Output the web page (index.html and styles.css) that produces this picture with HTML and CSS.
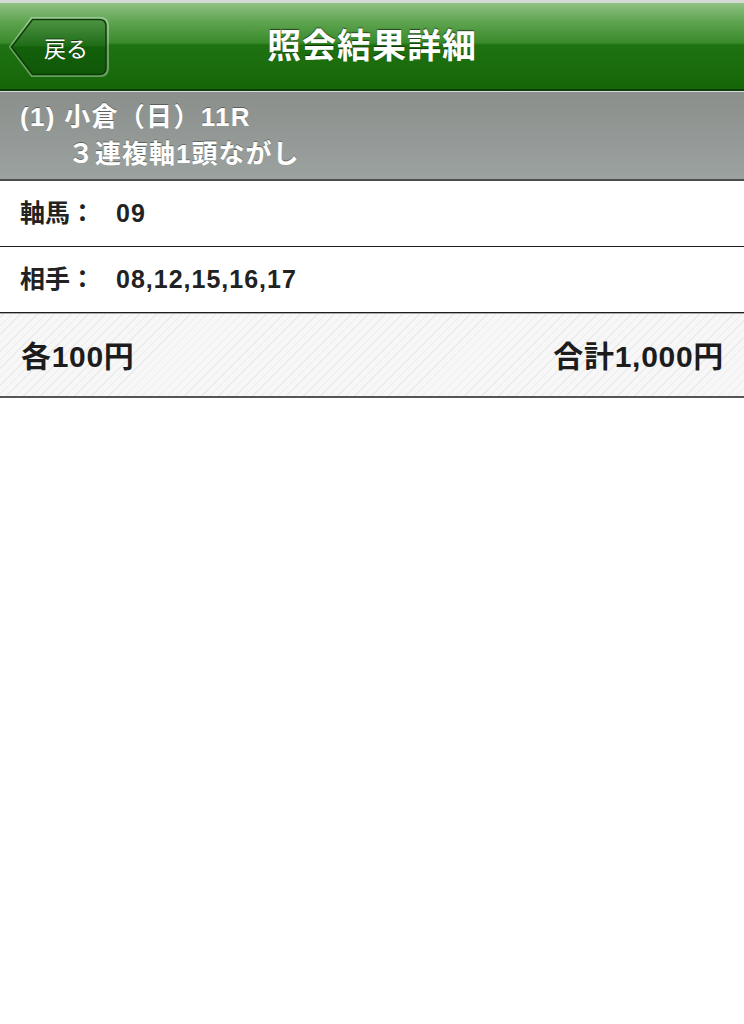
FILE: index.html
```html
<!DOCTYPE html>
<html lang="ja">
<head>
    <meta charset="UTF-8">
    <meta name="viewport" content="width=device-width, initial-scale=1.0">
    <title>照会結果詳細</title>
    <link rel="stylesheet" href="styles.css">
</head>
<body>

    <!-- ナビバー -->
    <div class="nav-bar">
        <button class="back-btn">
            <svg class="back-shape" width="100" height="62" viewBox="0 0 100 62">
                <defs>
                    <linearGradient id="btn-grad" x1="0" y1="0" x2="0" y2="1">
                        <stop offset="0" stop-color="#4d9443"/>
                        <stop offset="0.48" stop-color="#1f6c17"/>
                        <stop offset="0.5" stop-color="#13600b"/>
                        <stop offset="1" stop-color="#0f5808"/>
                    </linearGradient>
                </defs>
                <path d="M1.5 31 L23 2.5 H91 Q98.5 2.5 98.5 10 V52 Q98.5 59.5 91 59.5 H23 Z" fill="none" stroke="rgba(255,255,255,0.35)" stroke-width="3"/>
                <path d="M2.5 31 L23.5 3.5 H90.5 Q97 3.5 97 10 V52 Q97 58.5 90.5 58.5 H23.5 Z" fill="url(#btn-grad)" stroke="#0a3d05" stroke-width="1.5"/>
            </svg>
            <span class="back-label">戻る</span>
        </button>
        <h1 class="nav-title">照会結果詳細</h1>
    </div>

    <!-- レース情報 -->
    <div class="race-header">
        <p class="race-name">(1) 小倉（日）11R</p>
        <p class="bet-type">３連複軸1頭ながし</p>
    </div>

    <div class="detail-row">
        <span class="row-label">軸馬：</span>09
    </div>
    <div class="detail-row">
        <span class="row-label">相手：</span>08,12,15,16,17
    </div>

    <!-- 金額 -->
    <div class="total-row">
        <span>各100円</span>
        <span>合計1,000円</span>
    </div>

</body>
</html>
```

FILE: styles.css
```css
* {
    margin: 0;
    padding: 0;
    box-sizing: border-box;
}

body {
    font-family: 'Liberation Sans', 'Noto Sans CJK JP', sans-serif;
    background: #fff;
    color: #222;
    width: 744px;
}

.nav-bar {
    position: relative;
    height: 91px;
    border-top: 3px solid #d6dad6;
    border-bottom: 2px solid #0c3f07;
    background: linear-gradient(to bottom, #8fc283 0%, #5ea450 22%, #3a8b2c 46%, #1f7211 49%, #1a6c0c 75%, #166608 100%);
    display: flex;
    align-items: center;
    justify-content: center;
}

.back-btn {
    position: absolute;
    left: 9px;
    top: 13px;
    width: 100px;
    height: 62px;
    border: none;
    background: none;
    cursor: pointer;
}

.back-shape {
    position: absolute;
    left: 0;
    top: 0;
}

.back-label {
    position: relative;
    display: block;
    padding-left: 14px;
    font-size: 22px;
    color: #fff;
    text-shadow: 0 -1px 0 rgba(0, 0, 0, 0.5);
    font-family: 'Noto Sans CJK JP', sans-serif;
}

.nav-title {
    font-size: 34px;
    font-weight: bold;
    color: #fff;
    letter-spacing: 1px;
    text-shadow: 0 -1px 1px rgba(0, 0, 0, 0.55);
    font-family: 'Noto Sans CJK JP', sans-serif;
    margin-top: -5px;
}

/* レース情報 */
.race-header {
    height: 90px;
    border-top: 1px solid #d8dbd9;
    border-bottom: 2px solid #4b4d4c;
    background: linear-gradient(to bottom, #8a8f8c, #9ca29f);
    color: #fff;
    padding: 7px 0 0 20px;
    font-size: 26px;
    font-weight: bold;
    line-height: 37px;
    letter-spacing: 1.3px;
    text-shadow: 0 -1px 0 rgba(0, 0, 0, 0.35);
}

.bet-type {
    padding-left: 48px;
    letter-spacing: 1px;
}

.detail-row {
    height: 66px;
    line-height: 64px;
    padding: 0 20px;
    border-bottom: 1px solid #1e1e1e;
    font-size: 25px;
    font-weight: bold;
    letter-spacing: 1px;
    white-space: nowrap;
}

.row-label {
    display: inline-block;
    width: 96px;
    letter-spacing: 0;
}

/* 金額 */
.total-row {
    display: flex;
    align-items: center;
    justify-content: space-between;
    height: 85px;
    padding: 0 20px 2px 21px;
    border-top: 1px solid #aaa;
    border-bottom: 2px solid #555;
    background: repeating-linear-gradient(-45deg, #f7f7f7 0px, #f7f7f7 5px, #ebebeb 5px, #ebebeb 6px);
    font-size: 30px;
    font-weight: bold;
    letter-spacing: 0.7px;
    color: #1c1c1c;
}
```
